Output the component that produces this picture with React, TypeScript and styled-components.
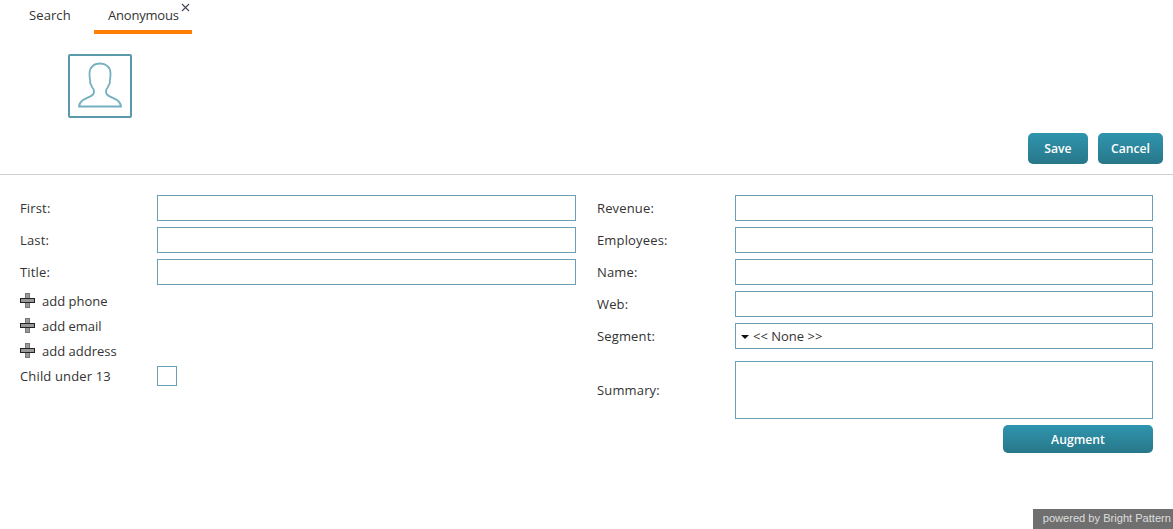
import { FC } from 'react'
import styled, { createGlobalStyle } from 'styled-components'

const GlobalStyle = createGlobalStyle`
  html, body {
    margin: 0;
    padding: 0;
    background: #fff;
  }
  body {
    font-family: "Open Sans", "DejaVu Sans", sans-serif;
    font-size: 13px;
    color: #333;
  }
`

const Page = styled.div`
  width: 1173px;
  height: 529px;
  overflow: hidden;
  position: relative;
  display: flex;
  flex-direction: column;
`

// tabs

const TabBar = styled.div`
  display: flex;
  height: 34px;
  padding-left: 15px;
`

const Tab = styled.div<{ $width: number; $active?: boolean }>`
  position: relative;
  box-sizing: border-box;
  width: ${(p) => p.$width}px;
  height: 34px;
  padding: 7px 0 0 14px;
  line-height: 17px;
  white-space: nowrap;
  letter-spacing: ${(p) => (p.$active ? '-0.2px' : '0.1px')};
  border-bottom: 4px solid ${(p) => (p.$active ? '#ff8000' : 'transparent')};
`

const TabClose = styled.span`
  position: absolute;
  top: 3px;
  right: 2px;
  width: 9px;
  height: 9px;
  display: flex;
`

// header with the avatar and actions

const Header = styled.div`
  box-sizing: border-box;
  height: 141px;
  padding: 20px 10px 0 68px;
  border-bottom: 1px solid #d0d0d0;
  display: flex;
  flex-direction: column;
`

const Avatar = styled.div`
  box-sizing: border-box;
  width: 64px;
  height: 64px;
  border: 2px solid #5b9aab;
  border-radius: 2px;
  display: flex;
  align-items: center;
  justify-content: center;
`

const Actions = styled.div`
  display: flex;
  justify-content: flex-end;
  gap: 10px;
  margin-top: 15px;
`

const Button = styled.button<{ $width: number; $height?: number }>`
  width: ${(p) => p.$width}px;
  height: ${(p) => p.$height ?? 31}px;
  padding: 0;
  border: 0;
  border-radius: 5px;
  background: linear-gradient(#2f95ae, #287789);
  color: #fff;
  font-family: inherit;
  font-size: 12.2px;
  font-weight: 600;
`

// form

const Form = styled.div`
  display: grid;
  grid-template-columns: 556px 556px;
  column-gap: 21px;
  padding: 20px 0 0 20px;
`

const Column = styled.div`
  display: flex;
  flex-direction: column;
`

const Row = styled.div`
  display: flex;
  align-items: center;
  height: 26px;
  margin-bottom: 6px;
`

const Label = styled.div`
  width: 137px;
  flex: none;
  letter-spacing: 0.15px;
`

const RightLabel = styled(Label)`
  width: 138px;
`

const Input = styled.div<{ $width: number }>`
  box-sizing: border-box;
  width: ${(p) => p.$width}px;
  height: 26px;
  border: 1px solid #6a9fb5;
  background: #fff;
`

const Select = styled(Input)`
  display: flex;
  align-items: center;
  padding-left: 5px;
  gap: 4px;
`

const Caret = styled.span`
  width: 0;
  height: 0;
  border-left: 4px solid transparent;
  border-right: 4px solid transparent;
  border-top: 4px solid #111;
  margin-top: 1px;
`

const AddList = styled.div`
  display: flex;
  flex-direction: column;
  margin-top: -3px;
`

const AddRow = styled.div`
  display: flex;
  align-items: center;
  gap: 7px;
  height: 25px;
`

const ChildRow = styled.div`
  display: flex;
  align-items: center;
  height: 25px;
`

const Checkbox = styled.div`
  box-sizing: border-box;
  width: 20px;
  height: 20px;
  border: 1px solid #6a9fb5;
`

const SummaryRow = styled.div`
  display: flex;
  align-items: center;
  height: 58px;
  margin-top: 6px;
`

const Summary = styled(Input)`
  height: 58px;
`

const AugmentRow = styled.div`
  display: flex;
  justify-content: flex-end;
  width: 556px;
  margin-top: 6px;
`

const Footer = styled.div`
  position: absolute;
  right: 0;
  bottom: 0;
  width: 140px;
  height: 20px;
  background: #6f6f6f;
  color: #dedede;
  font-family: "Liberation Sans", Arial, sans-serif;
  font-size: 11.1px;
  line-height: 19px;
  text-align: right;
  padding-right: 2px;
  box-sizing: border-box;
`

const PlusIcon: FC = () => (
  <svg width="15" height="15" viewBox="0 0 15 15">
    <rect x="5.500" y="0.500" width="4" height="14" fill="#999" stroke="#777" />
    <rect x="0.500" y="5.500" width="14" height="4" fill="#999" stroke="#222" />
    <rect x="6" y="6" width="3" height="3" fill="#999" />
  </svg>
)

const leftFields = ['First:', 'Last:', 'Title:']
const rightFields = ['Revenue:', 'Employees:', 'Name:', 'Web:']
const addLines = ['add phone', 'add email', 'add address']

const App: FC = () => {
  return (
    <Page>
      <GlobalStyle />

      <TabBar>
        <Tab $width={79}>Search</Tab>
        <Tab $width={98} $active>
          Anonymous
          <TabClose>
            <svg width="9" height="9" viewBox="0 0 9 9">
              <path d="M1 1l7 7M8 1L1 8" stroke="#445" strokeWidth="1.1" />
            </svg>
          </TabClose>
        </Tab>
      </TabBar>

      <Header>
        <Avatar>
          <svg width="46" height="48" viewBox="0 0 46 48" fill="none">
            <path
              d="M23 1.500c-6 0-10.500 3.500-10.500 10 0 3 .2 5.500 .8 7.500-.6 1-.2 2.500 .7 3.500 .6 2 1.500 3.500 2.500 4.800 .6 1.500 .5 4-.5 5.200-2.500 2.500-7 3.500-10 5.500-2.500 1.700-3.800 4-4 6.500h42c-.2-2.500-1.500-4.800-4-6.500-3-2-7.500-3-10-5.500-1-1.200-1.100-3.700-.5-5.200 1-1.300 1.900-2.800 2.500-4.800 .9-1 1.300-2.500 .7-3.500 .6-2 .8-4.500 .8-7.500 0-6.500-4.500-10-10.500-10z"
              stroke="#74b0bf"
              strokeWidth="1.800"
            />
          </svg>
        </Avatar>
        <Actions>
          <Button $width={60}>Save</Button>
          <Button $width={65}>Cancel</Button>
        </Actions>
      </Header>

      <Form>
        <Column>
          {leftFields.map((field) => (
            <Row key={field}>
              <Label>{field}</Label>
              <Input $width={419} />
            </Row>
          ))}
          <AddList>
            {addLines.map((line) => (
              <AddRow key={line}>
                <PlusIcon />
                {line}
              </AddRow>
            ))}
            <ChildRow>
              <Label>Child under 13</Label>
              <Checkbox />
            </ChildRow>
          </AddList>
        </Column>

        <Column>
          {rightFields.map((field) => (
            <Row key={field}>
              <RightLabel>{field}</RightLabel>
              <Input $width={418} />
            </Row>
          ))}
          <Row>
            <RightLabel>Segment:</RightLabel>
            <Select $width={418}>
              <Caret />
              {'<< None >>'}
            </Select>
          </Row>
          <SummaryRow>
            <RightLabel>Summary:</RightLabel>
            <Summary $width={418} />
          </SummaryRow>
          <AugmentRow>
            <Button $width={150} $height={28}>Augment</Button>
          </AugmentRow>
        </Column>
      </Form>

      <Footer>powered by Bright Pattern</Footer>
    </Page>
  )
}

export default App
